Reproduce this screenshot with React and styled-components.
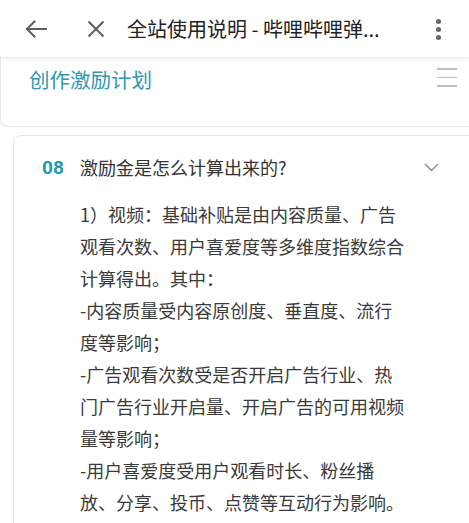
import React from 'react'
import styled, { createGlobalStyle } from 'styled-components';

const GlobalStyle = createGlobalStyle`
    html, body {
        margin: 0;
        padding: 0;
        background: #fff;
        overflow: hidden;
    }
    body {
        font-family: Roboto, "Noto Sans CJK SC", sans-serif;
        color: #333;
    }
`

const lines = [
    '1）视频：基础补贴是由内容质量、广告观看次数、用户喜爱度等多维度指数综合计算得出。其中：',
    '-内容质量受内容原创度、垂直度、流行度等影响；',
    '-广告观看次数受是否开启广告行业、热门广告行业开启量、开启广告的可用视频量等影响；',
    '-用户喜爱度受用户观看时长、粉丝播放、分享、投币、点赞等互动行为影响。',
];

function App() {
    return (
        <Page>
            <GlobalStyle />
            <TopBar>
                <IconButton>
                    <svg width="22" height="18" viewBox="0 0 22 18" fill="none" stroke="#5f5f5f" strokeWidth="2" strokeLinecap="square">
                        <path d="M2 9h19" />
                        <path d="M9.5 1.5L2 9l7.5 7.5" />
                    </svg>
                </IconButton>
                <IconButton>
                    <svg width="18" height="18" viewBox="0 0 18 18" fill="none" stroke="#5f5f5f" strokeWidth="2">
                        <path d="M1.5 1.5l15 15M16.5 1.5l-15 15" />
                    </svg>
                </IconButton>
                {/* title is already cut short in the original */}
                <Title>全站使用说明 - 哔哩哔哩弹...</Title>
                <Kebab>
                    <i /><i /><i />
                </Kebab>
            </TopBar>

            <NavCard>
                <NavTitle>创作激励计划</NavTitle>
                <Burger>
                    <i /><i /><i />
                </Burger>
            </NavCard>

            <QaCard>
                <Question>
                    <Num>08</Num>
                    <QText>激励金是怎么计算出来的?</QText>
                    <svg width="15" height="9" viewBox="0 0 15 9" fill="none" stroke="#8a8a8a" strokeWidth="1.4">
                        <path d="M1 1l6.5 6.5L14 1" />
                    </svg>
                </Question>
                <Answer>
                    {lines.map((l, i) => <p key={i}>{l}</p>)}
                </Answer>
            </QaCard>
        </Page>
    );
};

export default App;

const Page = styled.div`
    width: 469px;
    height: 523px;
    overflow: hidden;
`

const TopBar = styled.div`
    position: relative;
    z-index: 2;
    height: 57px;
    display: flex;
    align-items: center;
    padding-left: 25px;
    background: #fff;
    box-shadow: 0 1px 4px rgba(0,0,0,0.12);
`

const IconButton = styled.div`
    width: 22px;
    height: 22px;
    display: flex;
    align-items: center;
    justify-content: center;
    margin-right: 40px;
    &:nth-child(2) {
        margin-right: 20px;
        margin-left: -2px;
    }
`

const Title = styled.div`
    font-size: 20px;
    color: #222;
    white-space: nowrap;
    font-family: "Noto Sans CJK SC", sans-serif;
`

const Kebab = styled.div`
    margin-left: auto;
    margin-right: 28px;
    display: flex;
    flex-direction: column;
    gap: 3px;
    padding-top: 2px;
    i {
        width: 5px;
        height: 5px;
        border-radius: 50%;
        background: #666;
    }
`

const NavCard = styled.div`
    height: 70px;
    margin-right: -20px;
    border: 1px solid #e6e6e6;
    border-top: none;
    border-radius: 0 0 8px 8px;
    display: flex;
    align-items: flex-start;
    padding: 10px 31px 0 28px;
    box-sizing: border-box;
`

const NavTitle = styled.div`
    font-family: "Noto Sans CJK SC", sans-serif;
    font-size: 20.5px;
    line-height: 24px;
    color: #2e98b2;
`

const Burger = styled.div`
    margin-left: auto;
    margin-top: 1px;
    display: flex;
    flex-direction: column;
    gap: 7px;
    i {
        width: 20px;
        height: 1.5px;
        background: #bdbdbd;
    }
`

const QaCard = styled.div`
    margin: 8px -20px 0 13px;
    height: 500px;
    border: 1px solid #e8e8e8;
    border-radius: 8px;
    padding: 19px 0 0 28px;
`

const Question = styled.div`
    display: flex;
    align-items: center;
    height: 24px;
    width: 397px;
    svg {
        margin-left: auto;
        margin-top: 1px;
    }
`

const Num = styled.span`
    font-family: Roboto, sans-serif;
    font-weight: 700;
    font-size: 19px;
    color: #1c9bb1;
    width: 38px;
`

const QText = styled.span`
    font-family: "Noto Sans CJK SC", sans-serif;
    font-size: 18px;
    color: #333;
`

const Answer = styled.div`
    margin-top: 19px;
    margin-left: 38px;
    width: 327px;
    font-family: "Noto Sans CJK SC", sans-serif;
    font-size: 18px;
    line-height: 32px;
    color: #3a3a3a;
    p {
        margin: 0;
    }
`
